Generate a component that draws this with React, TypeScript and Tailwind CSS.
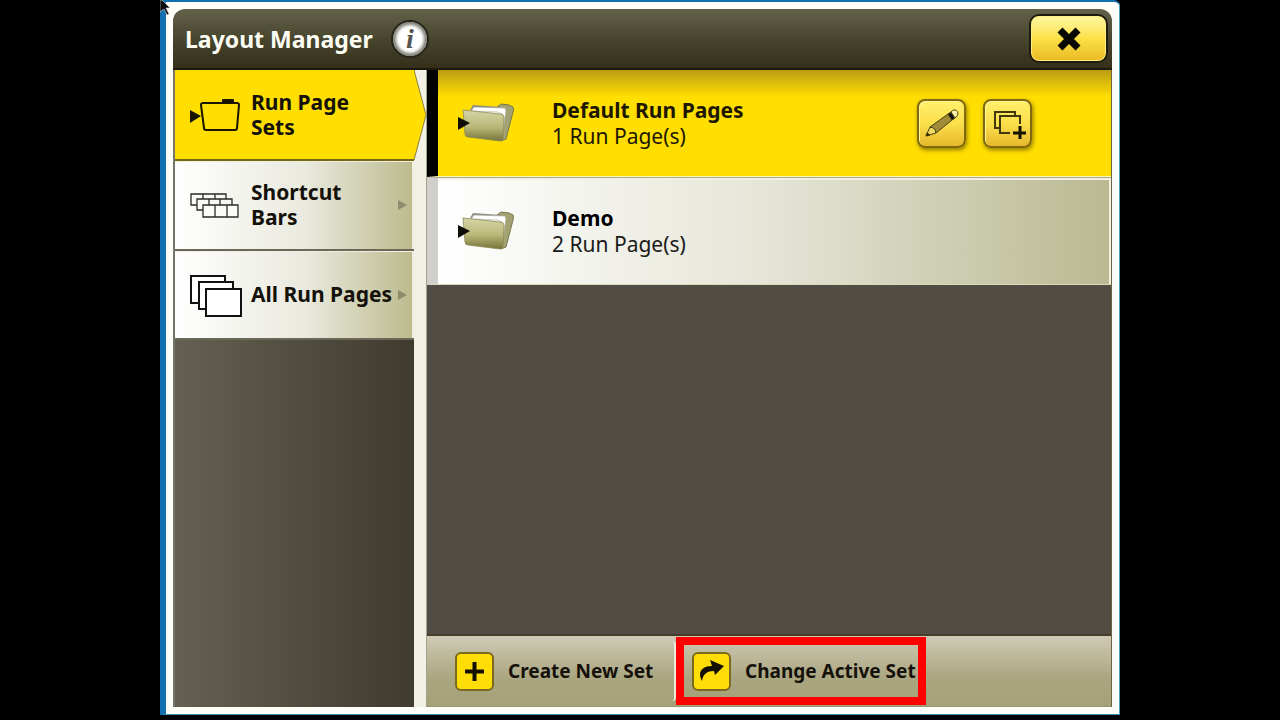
import type { ReactNode } from 'react';

const navBase = 'relative flex w-full items-center pl-[14px] text-left text-[21px] leading-[25px] font-bold text-[#14110a]';
const navIdle = 'border-b-2 border-[#6b6857] bg-linear-to-r from-white via-[#e9e9de] via-55% to-[#bcba8c] shadow-[inset_-2px_1px_0_#efeee0]';

const PageSetIcon = () => (
  <svg width="52" height="36" viewBox="0 0 52 36" fill="none" stroke="#1a1500" strokeWidth="2" strokeLinejoin="round">
    <path d="M14 6h34q2 0 2 2l-2 23q0 2-2 2H17q-2 0-2-2L12 8q0-2 2-2z" />
    <path d="M34 6V3h10v3z" fill="#1a1500" />
    <path d="M1 13l11 6-11 7z" fill="#1a1500" stroke="none" />
  </svg>
);

const ShortcutIcon = () => (
  <svg width="52" height="30" viewBox="0 0 52 30" fill="none" stroke="#2a2a26" strokeWidth="1.3">
    <path d="M8 15H2V4h35v5M14 4v5M26 4v5" />
    <path d="M14 20H8V9h35v6M20 9v6M31 9v6" />
    <path d="M14 15h35v12H14zM26 15v12M38 15v12" fill="#fbfbf8" />
  </svg>
);

const PagesIcon = () => (
  <svg width="54" height="44" viewBox="0 0 54 44" fill="#fff" stroke="#111" strokeWidth="2">
    <path d="M2 3h34v27H2z" />
    <path d="M10 9h34v27H10z" />
    <path d="M17 16h35v27H17z" />
  </svg>
);

const FolderIcon = ({ id }: { id: string }) => (
  <svg width="60" height="42" viewBox="0 0 60 42">
    <defs>
      <linearGradient id={id} x1="0" y1="0" x2="0" y2="1">
        <stop offset="0" stopColor="#d6d6a6" />
        <stop offset="0.55" stopColor="#b9b878" />
        <stop offset="1" stopColor="#77743a" />
      </linearGradient>
    </defs>
    <path d="M40 5l4-3 8 1 4 2q1 2 0 5l-7 27-5 2z" fill="#a3a272" stroke="#77764e" />
    <path d="M13 8l3-5 28 2-2 8z" fill="#8d8d80" />
    <path d="M14 9l3-4 31 1 1 3-4 28-5 1z" fill="#fff" stroke="#a9a99a" strokeWidth="0.7" />
    <path d="M15 9l26 1 4 2-2 24" fill="#fbfbf6" stroke="#b7b7a8" strokeWidth="0.7" />
    <path d="M6 8l37 4q4 0 4 3l-1 21q0 3-3 3l-32-4q-3 0-3-3z" fill={`url(#${id})`} stroke="#8b8956" strokeWidth="0.8" />
    <path d="M1 15l12 6-12 7z" fill="#0d0c06" />
  </svg>
);

const PencilIcon = () => (
  <svg width="38" height="32" viewBox="0 0 38 32" fill="none" stroke="#4a3f10" strokeWidth="1">
    <path d="M3 29l4-9 5 1 1 5z" fill="#f2da62" />
    <path d="M3 29l1-3 3 2z" fill="#221b00" />
    <path d="M7 20L25 7l4 6-16 13q0-5-6-6z" fill="#a08c38" />
    <path d="M25 7l3-2 4 6-3 2z" fill="#111" />
    <path d="M28 5c4-5 9 0 6 4l-2 2z" fill="#fbf1a6" />
  </svg>
);

const CopyIcon = () => (
  <svg width="36" height="32" viewBox="0 0 36 32" fill="none" stroke="#43380c" strokeWidth="2">
    <path d="M10 21H5V5h20v4" />
    <path d="M20 26H10V9h20v8" />
    <path d="M30 19v14M23 26h14" stroke="#161200" strokeWidth="3" />
  </svg>
);

const RowButton = ({ label, children }: { label: string; children: ReactNode }) => (
  <button
    aria-label={label}
    className="flex size-[49px] items-center justify-center rounded-lg border-2 border-[#80690f] bg-linear-to-b from-[#fff06a] via-[#fbdf4b] to-[#e7b82c] shadow-[1px_2px_4px_#8f7900,inset_1px_1px_0_#fff6a0]"
  >
    {children}
  </button>
);

const Tile = ({ children }: { children: ReactNode }) => (
  <span className="flex size-[39px] shrink-0 items-center justify-center rounded-md border-2 border-[#7a6a1c] bg-[#ffde08]">{children}</span>
);

const NavArrow = () => (
  <span className="mr-[7px] ml-auto h-0 w-0 border-y-[5px] border-l-9 border-y-transparent border-l-[#8d8c6e]" />
);

const App = () => {
  return (
    <div className="h-screen bg-black pb-[5px] font-['Noto_Sans','Open_Sans',sans-serif]">
      <div className="relative mx-auto flex h-full w-3/4 flex-col rounded-tr-md border-t-2 border-r border-b border-l-[6px] border-t-[#1370b0] border-r-[#4a9fc4] border-b-[#3d8cb8] border-l-[#1370b0] bg-[#fffffa] p-[7px]">
        {/* Mouse pointer */}
        <svg className="absolute -top-[2px] -left-[6px]" width="12" height="16" viewBox="0 0 12 16">
          <path d="M0 0h2l8 8H6l3 6-2 1-3-6-4 3z" fill="#0b0b0b" stroke="#ddd" strokeWidth="0.6" />
        </svg>

        {/* Header */}
        <header className="flex h-[61px] shrink-0 items-center rounded-t-xl border-b-2 border-[#1c190c] bg-linear-to-b from-[#64624a] via-[#48462f] to-[#352f1a] pr-[4px] pl-[12px]">
          <h1 className="text-[23px] leading-[30px] font-bold text-[#fdfdf4]">Layout Manager</h1>
          <button aria-label="Information" className="ml-[18px] flex size-[38px] items-center justify-center rounded-full border-2 border-[#25231a] bg-white shadow-[inset_0_0_3px_3px_#85857c]">
            <span className="font-['Liberation_Serif',serif] text-[28px] leading-[28px] font-bold text-[#55554e] italic">i</span>
          </button>
          <button aria-label="Close" className="ml-auto flex h-[49px] w-[79px] items-center justify-center rounded-[10px] border-2 border-[#1f1c0d] bg-linear-to-b from-[#fff8a0] via-[#fce145] to-[#eab923] shadow-[inset_0_0_0_1px_#ffef88]">
            <svg width="24" height="24" viewBox="0 0 24 24" stroke="#080700" strokeWidth="7" strokeLinejoin="round">
              <path d="M3 3l18 18M21 3L3 21" />
            </svg>
          </button>
        </header>

        <div className="flex min-h-0 flex-1">
          {/* Sidebar */}
          <nav className="w-[241px] shrink-0 border-l-2 border-[#77746a] bg-linear-to-r from-[#646153] to-[#3f3c2f]">
            <button className={`${navBase} h-[91px] border-b-2 border-[#756713] bg-[#ffde00]`}>
              <PageSetIcon />
              <span className="ml-[10px] w-[120px]">Run Page Sets</span>
              <svg className="absolute top-0 left-full" width="13" height="91" viewBox="0 0 13 91">
                <path d="M0 0l12 45L0 90z" fill="#ffde00" />
                <path d="M0 0l12 45L0 90" fill="none" stroke="#8b7f38" />
              </svg>
            </button>
            <button className={`${navBase} ${navIdle} h-[90px]`}>
              <ShortcutIcon />
              <span className="ml-[10px] w-[120px]">Shortcut Bars</span>
              <NavArrow />
            </button>
            <button className={`${navBase} ${navIdle} h-[89px]`}>
              <PagesIcon />
              <span className="ml-[8px] whitespace-nowrap">All Run Pages</span>
              <NavArrow />
            </button>
          </nav>
          <div className="w-[13px] shrink-0 border-r border-[#a5a28c] bg-[#f2f1e5]" />

          <main className="flex min-w-0 flex-1 flex-col border-r border-[#6e6343] bg-[#514d44]">
            {/* Page sets */}
            <section className="flex h-[107px] border-b border-l-[11px] border-b-[#fdf8b4] border-l-black bg-linear-to-b from-[#b99d10] via-[#ffde00] via-25% to-[#ffde00] pr-[79px]">
              <div className="flex flex-1 items-center pl-[19px]">
                <FolderIcon id="folder-default" />
                <div className="ml-[35px] text-[21px] leading-[26px] text-[#1d1700]">
                  <h2 className="font-bold">Default Run Pages</h2>
                  <p>1 Run Page(s)</p>
                </div>
                <div className="ml-auto flex gap-[17px]">
                  <RowButton label="Edit set">
                    <PencilIcon />
                  </RowButton>
                  <RowButton label="Copy set">
                    <CopyIcon />
                  </RowButton>
                </div>
              </div>
            </section>
            <section className="flex h-[108px] border-t border-b border-l-[11px] border-t-[#aaa68c] border-b-[#d9d8b8] border-l-[#d0cfcc] bg-linear-to-r from-white via-[#e4e4d6] via-50% to-[#b9b992] shadow-[inset_-2px_2px_0_#f3f2e2]">
              <div className="flex flex-1 items-center pl-[19px]">
                <FolderIcon id="folder-demo" />
                <div className="ml-[35px] text-[21px] leading-[26px] text-[#1a1a18]">
                  <h2 className="font-bold text-black">Demo</h2>
                  <p>2 Run Page(s)</p>
                </div>
              </div>
            </section>

            {/* Actions */}
            <footer className="mt-auto flex h-[73px] items-center border-t-2 border-b border-t-[#453d29] border-b-[#9b9475] bg-linear-to-b from-[#cfcab4] via-[#aaa681] via-60% to-[#a5a177] pl-[28px] text-[19px] leading-[26px] font-bold text-[#15110a]">
              <button className="flex h-[60px] w-[221px] items-center gap-[14px] rounded-sm border-r-2 border-[#eceadb]">
                <Tile>
                  <svg width="21" height="21" viewBox="0 0 21 21" stroke="#151100" strokeWidth="4">
                    <path d="M10.500 1v19M1 10.500h19" />
                  </svg>
                </Tile>
                Create New Set
              </button>
              <button className="flex h-[68px] items-center gap-[14px] border-8 border-[#ff0000] pr-[2px] pl-2 whitespace-nowrap">
                <Tile>
                  <svg width="27" height="24" viewBox="0 0 27 24" fill="#120e00">
                    <path d="M4 22C-1 13 4 7 14 7l-2-6 14 6-9 9-1-4C9 12 5 15 4 22z" />
                  </svg>
                </Tile>
                Change Active Set
              </button>
            </footer>
          </main>
        </div>
      </div>
    </div>
  );
};

export default App;
